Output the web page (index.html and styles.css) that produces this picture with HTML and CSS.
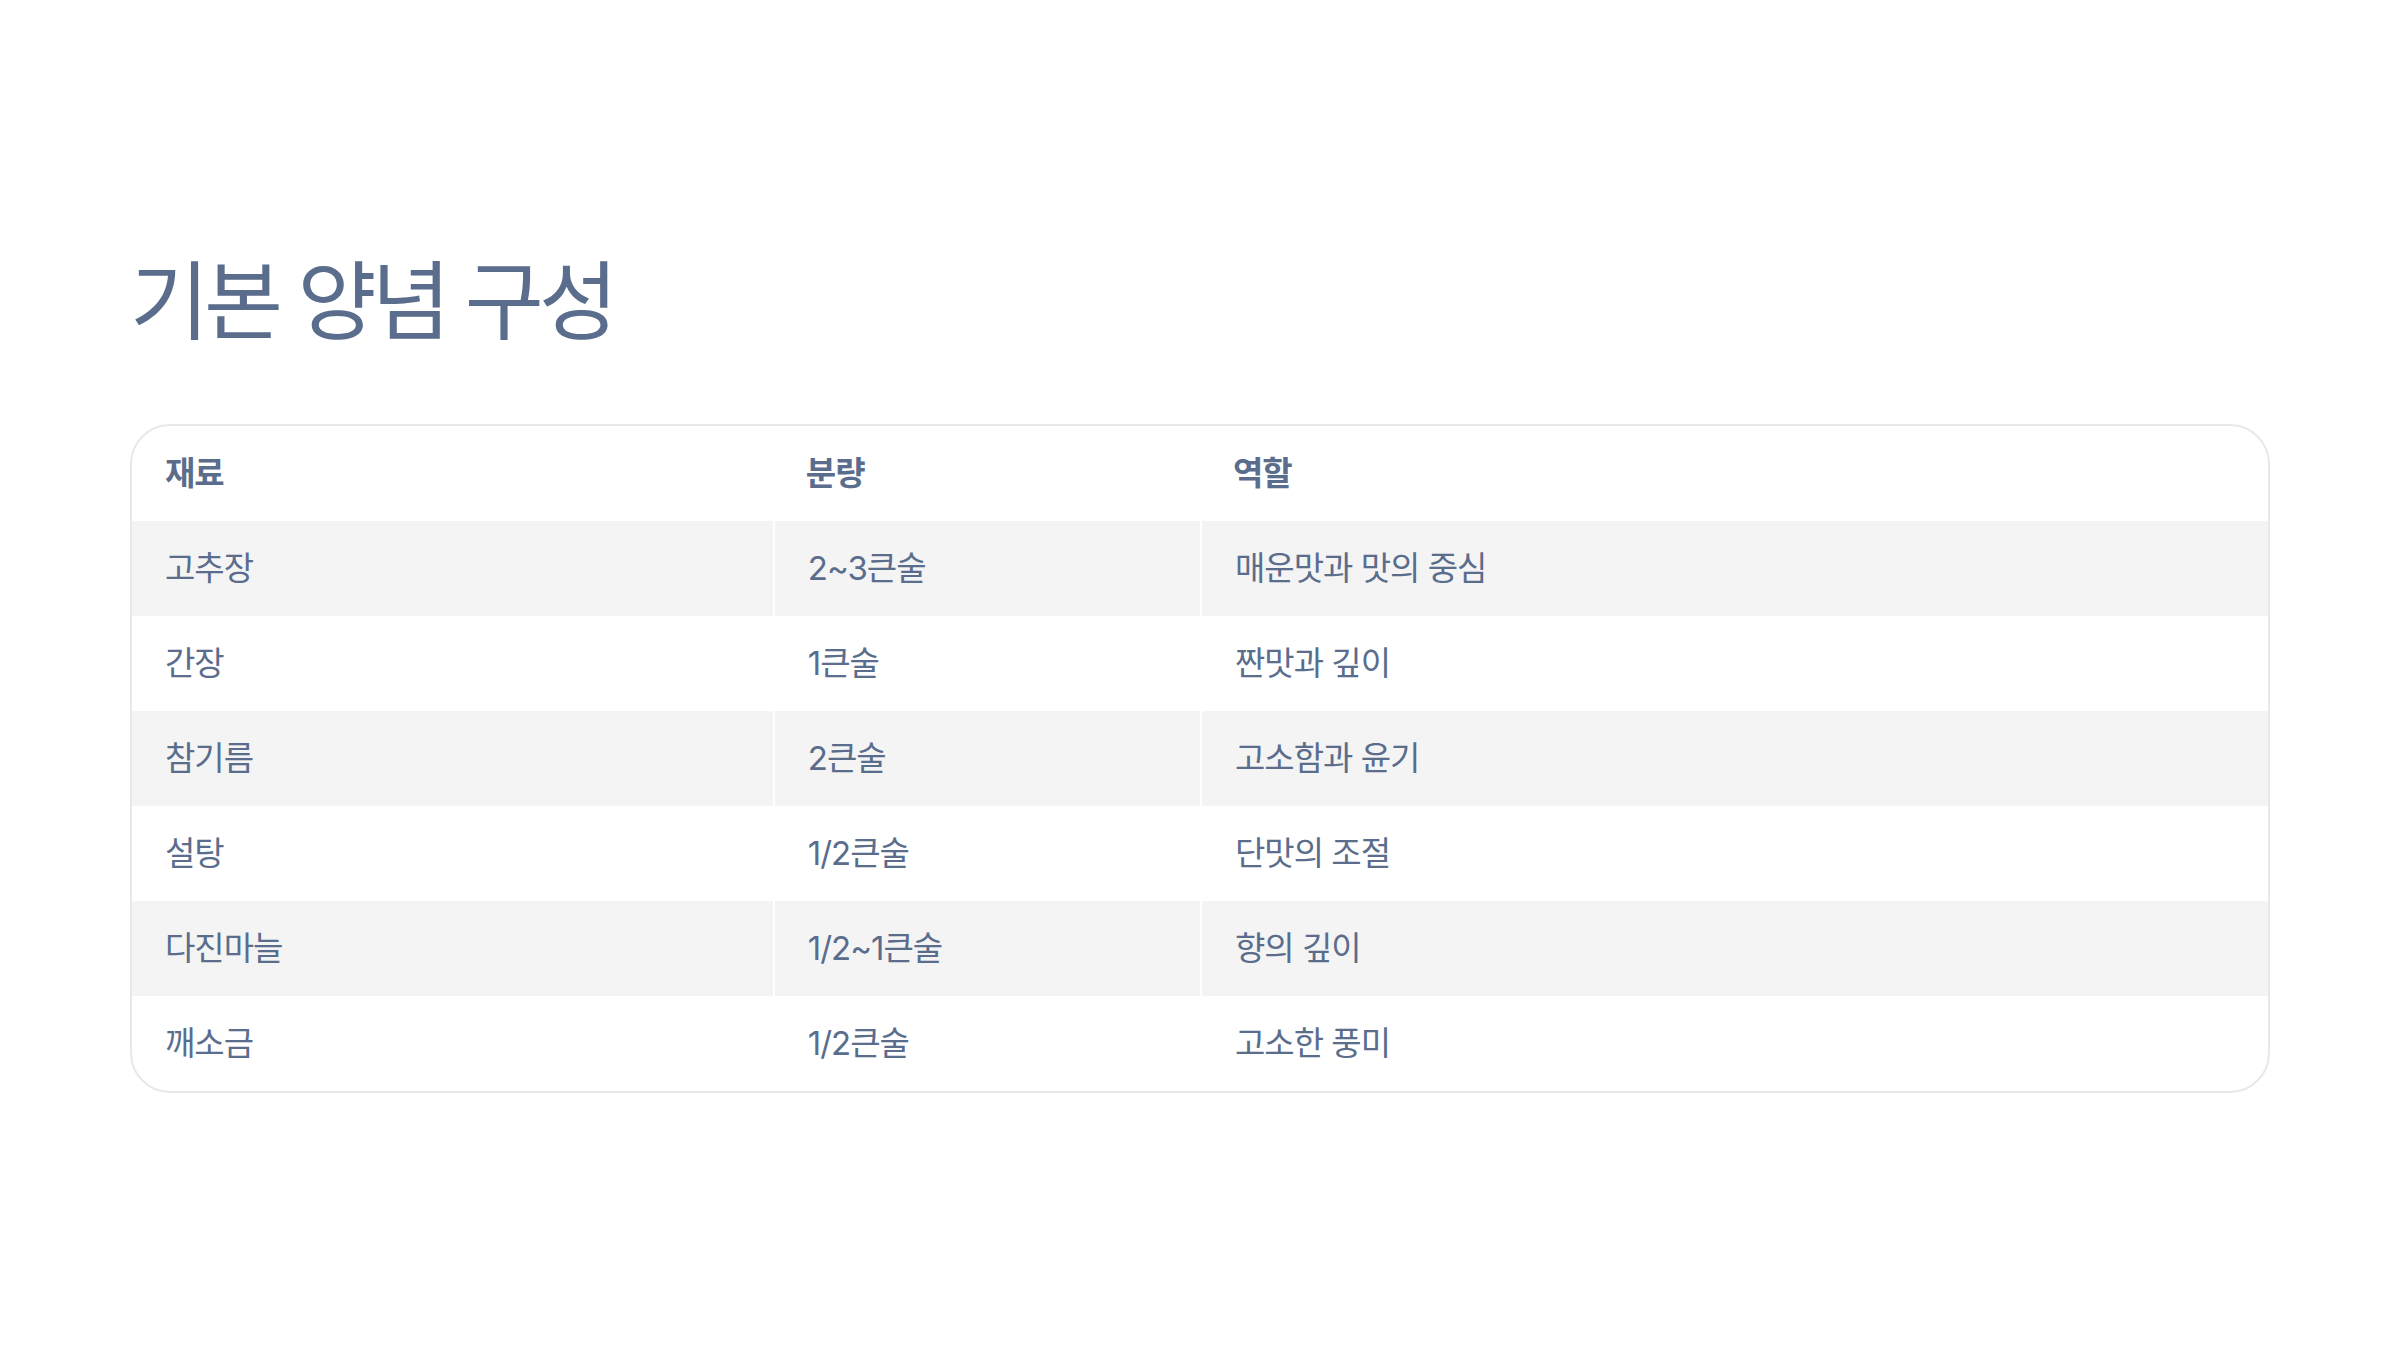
FILE: index.html
```html
<!DOCTYPE html>
<html lang="ko">
<head>
<meta charset="utf-8">
<link rel="stylesheet" href="styles.css">
</head>
<body>
<main class="slide">
  <h1 class="title">기본 양념 구성</h1>
  <div class="table-wrap">
    <table class="recipe">
      <colgroup>
        <col class="c1"><col class="c2"><col class="c3">
      </colgroup>
      <thead>
        <tr><th>재료</th><th>분량</th><th>역할</th></tr>
      </thead>
      <tbody>
        <tr><td>고추장</td><td>2~3큰술</td><td>매운맛과 맛의 중심</td></tr>
        <tr><td>간장</td><td>1큰술</td><td>짠맛과 깊이</td></tr>
        <tr><td>참기름</td><td>2큰술</td><td>고소함과 윤기</td></tr>
        <tr><td>설탕</td><td>1/2큰술</td><td>단맛의 조절</td></tr>
        <tr><td>다진마늘</td><td>1/2~1큰술</td><td>향의 깊이</td></tr>
        <tr><td>깨소금</td><td>1/2큰술</td><td>고소한 풍미</td></tr>
      </tbody>
    </table>
  </div>
</main>
</body>
</html>
```

FILE: styles.css
```css
html, body {
  margin: 0;
  padding: 0;
  background: #ffffff;
}
body {
  font-family: Inter, "Noto Sans CJK KR", sans-serif;
  color: #5a6d8c;
}
.slide {
  width: 2400px;
  height: 1350px;
  box-sizing: border-box;
  padding: 246px 130px 0 130px;
}
.title {
  margin: 0;
  font-size: 86px;
  font-weight: 400;
  line-height: 112px;
  letter-spacing: -5px;
  color: #5a6d8c;
}
.table-wrap {
  margin-top: 66px;
  border: 2px solid #e8e8e8;
  border-radius: 40px;
  overflow: hidden;
}
.recipe {
  width: 100%;
  border-collapse: separate;
  border-spacing: 0;
  table-layout: fixed;
}
.c1 { width: 30%; }
.c2 { width: 20%; }
.c3 { width: 50%; }
.recipe th,
.recipe td {
  height: 95px;
  padding: 0 0 6px 33px;
  text-align: left;
  vertical-align: middle;
  font-size: 33px;
  letter-spacing: -1px;
  box-sizing: border-box;
}
.recipe th {
  font-weight: 700;
}
.recipe td {
  font-weight: 400;
}
.recipe td + td {
  border-left: 2px solid #ffffff;
}
.recipe tbody tr:nth-child(odd) td {
  background: #f4f4f4;
}
```
